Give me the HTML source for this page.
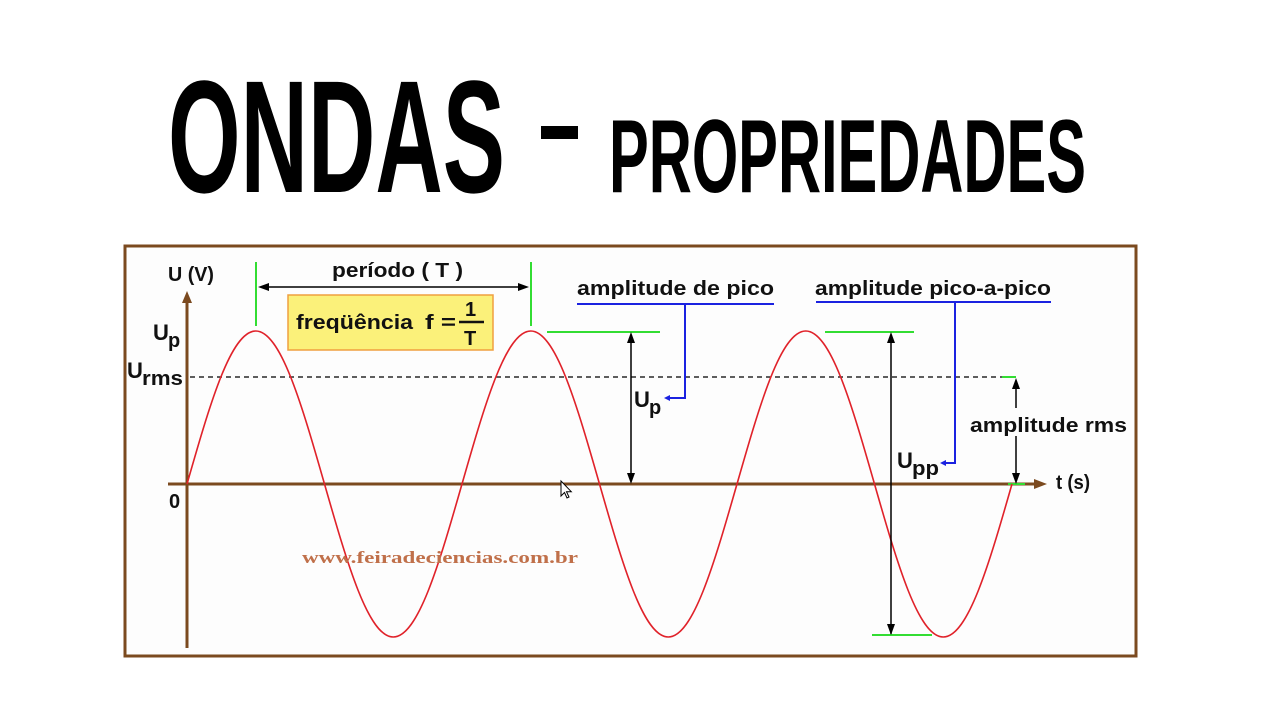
<!DOCTYPE html>
<html><head><meta charset="utf-8"><style>
html,body{margin:0;padding:0;background:#fff;width:1280px;height:720px;overflow:hidden}
svg{display:block}
</style></head><body>
<svg width="1280" height="720" viewBox="0 0 1280 720" xmlns="http://www.w3.org/2000/svg">
<rect width="1280" height="720" fill="#fff"/>
<text x="168" y="192" font-family="Liberation Sans Narrow, Liberation Sans, sans-serif" font-weight="bold" font-size="160" textLength="337" lengthAdjust="spacingAndGlyphs" fill="#000">ONDAS</text>
<rect x="541" y="126" width="37" height="13" fill="#000"/>
<text x="609" y="192" font-family="Liberation Sans Narrow, Liberation Sans, sans-serif" font-weight="bold" font-size="104" textLength="477" lengthAdjust="spacingAndGlyphs" fill="#000">PROPRIEDADES</text>

<rect x="125" y="246" width="1011" height="410" fill="#fdfdfd" stroke="#7b4a1f" stroke-width="3"/>

<line x1="190" y1="377" x2="1010" y2="377" stroke="#000" stroke-width="1.3" stroke-dasharray="5,4"/>

<line x1="187" y1="300" x2="187" y2="648" stroke="#7b4a1f" stroke-width="3"/>
<polygon points="187,291 182,303 192,303" fill="#7b4a1f"/>
<line x1="168" y1="484" x2="1036" y2="484" stroke="#7b4a1f" stroke-width="3"/>
<polygon points="1047,484 1034,479 1034,489" fill="#7b4a1f"/>

<g stroke="#33dd33" stroke-width="2">
<line x1="256" y1="262" x2="256" y2="326"/>
<line x1="531" y1="262" x2="531" y2="326"/>
<line x1="547" y1="332" x2="660" y2="332"/>
<line x1="825" y1="332" x2="914" y2="332"/>
<line x1="1002" y1="377" x2="1016" y2="377"/>
<line x1="872" y1="635" x2="932" y2="635"/>
<line x1="1008" y1="484" x2="1025" y2="484"/>
</g>

<path d="M187,484 c23,-80.3 44,-153 68.75,-153 c24.75,0 45.77,72.7 68.75,153 c23,80.3 44,153 68.75,153 c24.75,0 45.77,-72.7 68.75,-153
 c23,-80.3 44,-153 68.75,-153 c24.75,0 45.77,72.7 68.75,153 c23,80.3 44,153 68.75,153 c24.75,0 45.77,-72.7 68.75,-153
 c23,-80.3 44,-153 68.75,-153 c24.75,0 45.77,72.7 68.75,153 c23,80.3 44,153 68.75,153 c24.75,0 45.77,-72.7 68.75,-153" fill="none" stroke="#e0222a" stroke-width="1.6"/>

<line x1="266" y1="287" x2="521" y2="287" stroke="#000" stroke-width="1.5"/>
<polygon points="258,287 269,283 269,291" fill="#000"/>
<polygon points="529,287 518,283 518,291" fill="#000"/>

<g stroke="#000" stroke-width="1.5">
<line x1="631" y1="340" x2="631" y2="476"/>
<line x1="891" y1="340" x2="891" y2="634"/>
<line x1="1016" y1="385" x2="1016" y2="408"/>
<line x1="1016" y1="436" x2="1016" y2="476"/>
</g>
<g fill="#000">
<polygon points="631,332 627,343 635,343"/><polygon points="631,484 627,473 635,473"/>
<polygon points="891,332 887,343 895,343"/><polygon points="891,635 887,624 895,624"/>
<polygon points="1016,378 1012,389 1020,389"/><polygon points="1016,484 1012,473 1020,473"/>
</g>

<g stroke="#1b22e0" stroke-width="2" fill="none">
<line x1="577" y1="304" x2="774" y2="304"/>
<polyline points="685,304 685,398 668,398"/>
<line x1="816" y1="302" x2="1051" y2="302"/>
<polyline points="955,302 955,463 944,463"/>
</g>
<polygon points="664,398 670,395 670,401" fill="#1b22e0"/>
<polygon points="940,463 946,460 946,466" fill="#1b22e0"/>

<rect x="288" y="295" width="205" height="55" fill="#fbf17a" stroke="#f0a040" stroke-width="1.5"/>

<g font-family="Liberation Sans, Arial, sans-serif" font-weight="bold" fill="#111">
<text x="168" y="281" font-size="20" textLength="46" lengthAdjust="spacingAndGlyphs">U (V)</text>
<text x="332" y="277" font-size="20" textLength="131" lengthAdjust="spacingAndGlyphs">período ( T )</text>
<text x="296" y="329" font-size="20" textLength="117" lengthAdjust="spacingAndGlyphs">freqüência</text>
<text x="425" y="329" font-size="20" textLength="31" lengthAdjust="spacingAndGlyphs">f =</text>
<text x="465" y="316" font-size="20">1</text>
<line x1="459" y1="322" x2="484" y2="322" stroke="#111" stroke-width="2.5"/>
<text x="464" y="345" font-size="20">T</text>
<text x="153" y="340" font-size="22">U</text><text x="168" y="347" font-size="20">p</text>
<text x="127" y="378" font-size="22">U</text><text x="142" y="385" font-size="20" textLength="41" lengthAdjust="spacingAndGlyphs">rms</text>
<text x="169" y="508" font-size="20">0</text>
<text x="577" y="295" font-size="20" textLength="197" lengthAdjust="spacingAndGlyphs">amplitude de pico</text>
<text x="815" y="295" font-size="20" textLength="236" lengthAdjust="spacingAndGlyphs">amplitude pico-a-pico</text>
<text x="634" y="407" font-size="22">U</text><text x="649" y="414" font-size="20">p</text>
<text x="897" y="468" font-size="22">U</text><text x="912" y="475" font-size="20" textLength="27" lengthAdjust="spacingAndGlyphs">pp</text>
<text x="970" y="432" font-size="20" textLength="157" lengthAdjust="spacingAndGlyphs">amplitude rms</text>
<text x="1056" y="489" font-size="20" textLength="34" lengthAdjust="spacingAndGlyphs">t (s)</text>
</g>
<text x="302" y="563" font-family="Liberation Serif, serif" font-weight="bold" font-size="17" fill="#c0704a" textLength="276" lengthAdjust="spacingAndGlyphs">www.feiradeciencias.com.br</text>

<path d="M561,481 l0,15 l3.5,-3.5 l2.5,5.5 l2,-1 l-2.5,-5.3 l4.8,0 z" fill="#fff" stroke="#000" stroke-width="1"/>
</svg>
</body></html>
